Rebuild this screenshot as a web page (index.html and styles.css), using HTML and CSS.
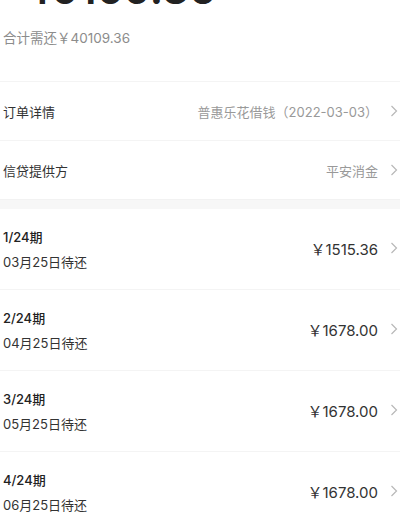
FILE: index.html
```html
<!DOCTYPE html>
<html lang="zh">
<head>
<meta charset="utf-8">
<link rel="stylesheet" href="styles.css">
</head>
<body>
<div class="page">
  <div class="hero">40109.36</div>
  <div class="total">合计需还￥40109.36</div>
  <div class="info">
    <div class="row">
      <span class="label">订单详情</span>
      <span class="value">普惠乐花借钱（2022-03-03）<svg class="chev" viewBox="0 0 8 12"><polyline points="1.5,1 6.5,6 1.5,11"/></svg></span>
    </div>
    <div class="row">
      <span class="label">信贷提供方</span>
      <span class="value">平安消金<svg class="chev" viewBox="0 0 8 12"><polyline points="1.5,1 6.5,6 1.5,11"/></svg></span>
    </div>
  </div>
  <div class="band"></div>
  <div class="plans">
    <div class="plan">
      <div class="left"><div class="term">1/24期</div><div class="date">03月25日待还</div></div>
      <div class="amount">￥1515.36<svg class="chev" viewBox="0 0 8 12"><polyline points="1.5,1 6.5,6 1.5,11"/></svg></div>
    </div>
    <div class="plan">
      <div class="left"><div class="term">2/24期</div><div class="date">04月25日待还</div></div>
      <div class="amount">￥1678.00<svg class="chev" viewBox="0 0 8 12"><polyline points="1.5,1 6.5,6 1.5,11"/></svg></div>
    </div>
    <div class="plan">
      <div class="left"><div class="term">3/24期</div><div class="date">05月25日待还</div></div>
      <div class="amount">￥1678.00<svg class="chev" viewBox="0 0 8 12"><polyline points="1.5,1 6.5,6 1.5,11"/></svg></div>
    </div>
    <div class="plan">
      <div class="left"><div class="term">4/24期</div><div class="date">06月25日待还</div></div>
      <div class="amount">￥1678.00<svg class="chev" viewBox="0 0 8 12"><polyline points="1.5,1 6.5,6 1.5,11"/></svg></div>
    </div>
  </div>
</div>
</body>
</html>
```
FILE: styles.css
```css
html, body {
  margin: 0;
  padding: 0;
  background: #fff;
  overflow: hidden;
}
.page {
  font-family: "Inter", "Noto Sans CJK SC", sans-serif;
  color: #333;
  font-size: 13px;
}
.hero {
  font-size: 42px;
  font-weight: 600;
  line-height: 46px;
  height: 46px;
  margin-top: -34px;
  padding-left: 23px;
  color: #222;
}
.total {
  padding-left: 3px;
  font-size: 13.5px;
  color: #8c8c8c;
  line-height: 20px;
  margin-top: 16px;
  height: 20px;
}
.info {
  margin-top: 33px;
  border-top: 1px solid #f4f4f4;
}
.row {
  display: flex;
  justify-content: space-between;
  align-items: center;
  height: 58px;
  padding: 0 2px 0 3px;
  border-bottom: 1px solid #f4f4f4;
}
.row:last-child { border-bottom: none; }
.label {
  color: #333;
  font-size: 13px;
}
.value {
  display: flex;
  align-items: center;
  color: #999;
  font-size: 13px;
}
.chev {
  width: 8px;
  height: 12px;
  margin-left: 12px;
  fill: none;
  stroke: #b8b8b8;
  stroke-width: 1.2;
}
.band {
  height: 9px;
  background: #f7f7f7;
  border-top: 1px solid #f2f2f2;
}
.plan {
  display: flex;
  justify-content: space-between;
  align-items: center;
  height: 80px;
  padding: 0 2px 0 3px;
  border-bottom: 1px solid #f4f4f4;
}
.left {
  display: flex;
  flex-direction: column;
  margin-top: 1px;
}
.term {
  font-weight: 500;
  color: #222;
  line-height: 25px;
  font-size: 13px;
}
.date {
  line-height: 25px;
  color: #333;
  font-size: 13px;
}
.amount {
  display: flex;
  align-items: center;
  font-size: 15px;
  color: #333;
  margin-top: -2px;
}
```
